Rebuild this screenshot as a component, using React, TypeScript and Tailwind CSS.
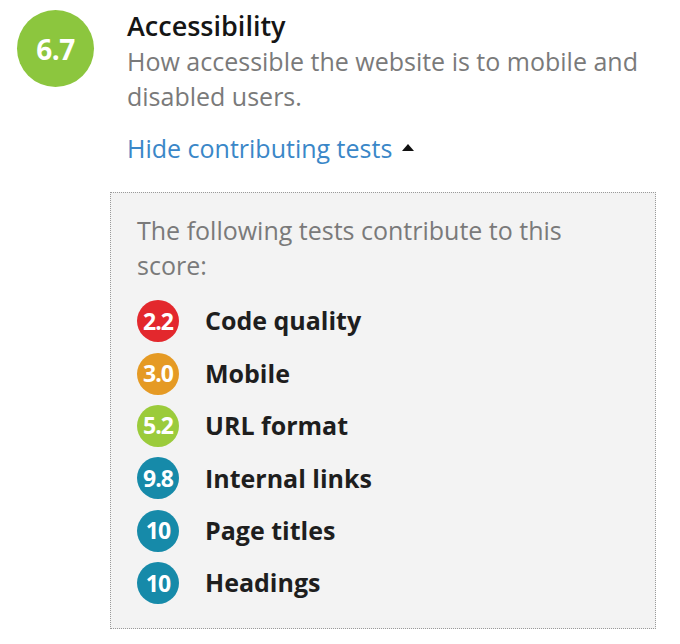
import React from 'react';

const tests = [
  { score: '2.2', label: 'Code quality', color: 'bg-[#e3282d]' },
  { score: '3.0', label: 'Mobile', color: 'bg-[#e59a24]' },
  { score: '5.2', label: 'URL format', color: 'bg-[#9bcb3b]' },
  { score: '9.8', label: 'Internal links', color: 'bg-[#168aa9]' },
  { score: '10', label: 'Page titles', color: 'bg-[#168aa9]' },
  { score: '10', label: 'Headings', color: 'bg-[#168aa9]' },
];

export default function App() {
  return (
    <div className="w-[680px] h-[644px] bg-white font-['Open_Sans',sans-serif] overflow-hidden">
      <div className="flex pl-[17px] pt-[10px]">
        {/* Score badge */}
        <div className="w-[77px] h-[77px] shrink-0 rounded-full bg-[#8cc63e] flex items-center justify-center">
          <span className="text-white text-[28px] font-bold tracking-[-0.5px] leading-none">6.7</span>
        </div>

        <div className="ml-[33px] w-[545px]">
          <h2 className="text-[27px] leading-[32px] font-semibold text-[#151515]">Accessibility</h2>
          <p className="text-[25px] leading-[35px] text-[#7a7a7a] mt-[2px]">
            How accessible the website is to mobile and disabled users.
          </p>
          <button className="mt-[17px] flex items-center text-[25px] leading-[35px] text-[#3a87c8]">
            Hide contributing tests
            <svg width="12" height="7" viewBox="0 0 12 7" className="ml-[10px] mt-[-2px]">
              <polygon points="6,0 12,7 0,7" fill="#111" />
            </svg>
          </button>
        </div>
      </div>

      {/* Contributing tests */}
      <div className="ml-[110px] mt-[26px] w-[546px] h-[437px] border border-dotted border-[#9a9a9a] bg-[#f3f3f3] pl-[26px] pr-[40px] pt-[20px]">
        <p className="text-[25px] leading-[35px] text-[#7a7a7a]">
          The following tests contribute to this score:
        </p>
        <ul className="mt-[12px]">
          {tests.map((t) => (
            <li key={t.label} className="flex items-center h-[52.4px]">
              <span
                className={`w-[42px] h-[42px] rounded-full ${t.color} flex items-center justify-center text-white text-[23px] font-bold tracking-[-1px] leading-none`}
              >
                {t.score}
              </span>
              <span className="ml-[26px] text-[25px] font-bold text-[#1e1e1e]">{t.label}</span>
            </li>
          ))}
        </ul>
      </div>
    </div>
  );
}
